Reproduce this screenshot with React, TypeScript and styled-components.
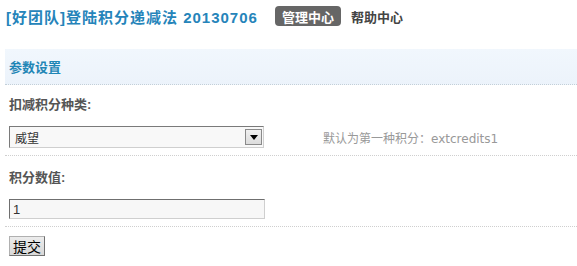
import React from "react";
import styled, { createGlobalStyle } from "styled-components";

const GlobalStyle = createGlobalStyle`
  html, body {
    margin: 0;
    padding: 0;
    background: #fff;
  }
  body {
    font-family: "Liberation Sans", "Noto Sans CJK SC", sans-serif;
    font-size: 12px;
    color: #333;
  }
`;

const Page = styled.div`
  width: 577px;
  padding-left: 5px;
  box-sizing: border-box;
`;

const TopBar = styled.div`
  display: flex;
  align-items: center;
  height: 32px;
`;

const Title = styled.h1`
  margin: 0 0 0 1px;
  font-size: 15px;
  font-weight: bold;
  letter-spacing: 1px;
  color: #2584ba;
  white-space: nowrap;
`;

const Nav = styled.div`
  display: flex;
  align-items: center;
  gap: 10px;
  margin-left: 17px;
`;

const NavLink = styled.a<{ $active?: boolean }>`
  display: inline-flex;
  align-items: center;
  height: 20px;
  padding: 0 ${(p) => (p.$active ? "7px" : "0")};
  border-radius: 4px;
  background: ${(p) => (p.$active ? "#666" : "transparent")};
  color: ${(p) => (p.$active ? "#fff" : "#444")};
  font-size: 13px;
  font-weight: bold;
  text-decoration: none;
  cursor: pointer;
`;

const SectionHead = styled.div`
  margin-top: 17px;
  height: 35px;
  display: flex;
  align-items: center;
  padding-left: 4px;
  background: linear-gradient(#f1f7fd, #ecf3fb);
  border-bottom: 1px dotted #c3cfd8;
  color: #1f86b6;
  font-size: 13px;
  font-weight: bold;
`;

const Row = styled.div<{ $line?: boolean }>`
  padding: 0 0 7px 4px;
  border-bottom: ${(p) => (p.$line ? "1px dotted #cfcfcf" : "none")};
`;

const Label = styled.div<{ $h: number }>`
  height: ${(p) => p.$h}px;
  display: flex;
  align-items: center;
  font-size: 13px;
  font-weight: bold;
  color: #555;
`;

const FieldLine = styled.div<{ $top: number }>`
  display: flex;
  align-items: center;
  margin-top: ${(p) => p.$top}px;
`;

const SelectBox = styled.div`
  box-sizing: border-box;
  width: 255px;
  height: 22px;
  display: flex;
  align-items: center;
  justify-content: space-between;
  padding: 0 1px 0 5px;
  background: #f8f8f8;
  border: 1px solid;
  border-color: #7a7a7a #cfcfcf #cfcfcf #7a7a7a;
  font-size: 12px;
  color: #333;
`;

const ArrowButton = styled.span`
  box-sizing: border-box;
  width: 17px;
  height: 16px;
  display: flex;
  align-items: center;
  justify-content: center;
  border: 1px solid #8a8a8a;
  background: linear-gradient(#f0f0f0, #dcdcdc);
`;

const Hint = styled.span`
  margin-left: 59px;
  font-family: "DejaVu Sans", "Noto Sans CJK SC", sans-serif;
  font-size: 12px;
  color: #999;
`;

const TextInput = styled.input`
  box-sizing: border-box;
  width: 256px;
  height: 20px;
  padding: 0 0 0 3px;
  background: #f7f7f7;
  border: 1px solid;
  border-color: #6f6f6f #cfcfcf #cfcfcf #6f6f6f;
  font-family: "Liberation Sans", sans-serif;
  font-size: 13px;
  color: #333;
  outline: none;
`;

const Submit = styled.button`
  box-sizing: border-box;
  margin: 9px 0 0 4px;
  width: 36px;
  height: 20px;
  padding: 0;
  background: linear-gradient(#ececec, #d8d8d8);
  border: 1px solid;
  border-color: #b0b0b0 #707070 #707070 #b0b0b0;
  font-family: "Noto Sans CJK SC", sans-serif;
  font-size: 14px;
  line-height: 18px;
  color: #000;
  cursor: pointer;
`;

export default function App() {
  return (
    <Page>
      <GlobalStyle />
      <TopBar>
        <Title>[好团队]登陆积分递减法 20130706</Title>
        <Nav>
          <NavLink $active>管理中心</NavLink>
          <NavLink>帮助中心</NavLink>
        </Nav>
      </TopBar>

      <SectionHead>参数设置</SectionHead>

      <Row $line>
        <Label $h={36}>扣减积分种类:</Label>
        <FieldLine $top={5}>
          <SelectBox>
            <span>威望</span>
            <ArrowButton>
              <svg width="8" height="5" viewBox="0 0 8 5">
                <path d="M0 0H8L4 5Z" fill="#000" />
              </svg>
            </ArrowButton>
          </SelectBox>
          <Hint>默认为第一种积分：extcredits1</Hint>
        </FieldLine>
      </Row>

      <Row $line>
        <Label $h={40}>积分数值:</Label>
        <FieldLine $top={3}>
          <TextInput defaultValue="1" />
        </FieldLine>
      </Row>

      <Submit>提交</Submit>
    </Page>
  );
}
